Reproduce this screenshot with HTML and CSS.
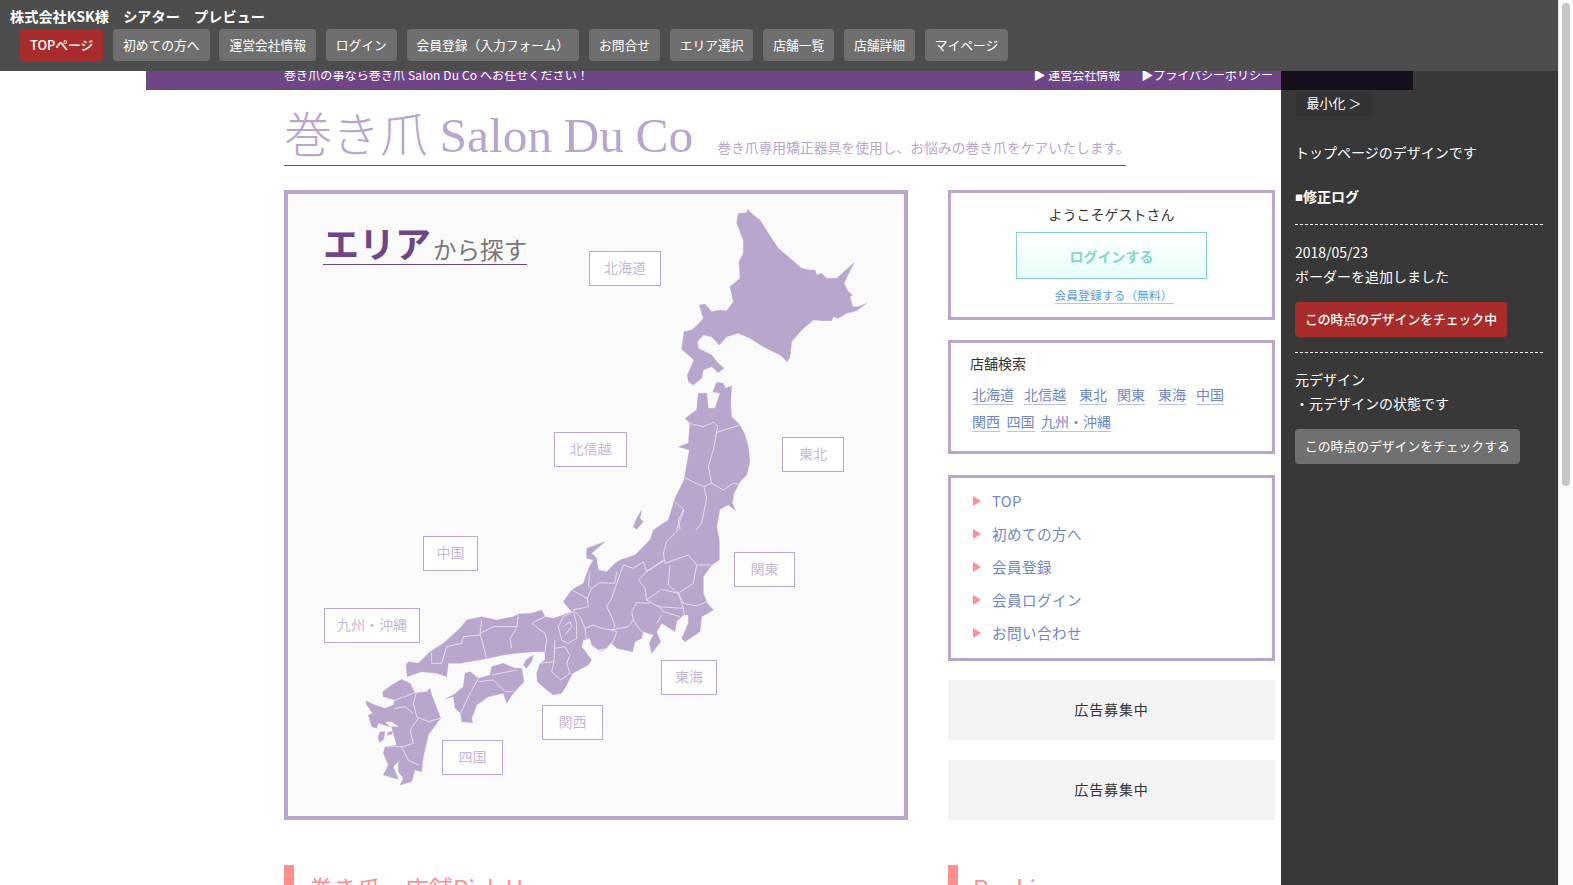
FILE: index.html
```html
<!DOCTYPE html>
<html lang="ja">
<head>
<meta charset="utf-8">
<title>巻き爪 Salon Du Co</title>
<link rel="stylesheet" href="styles.css">
</head>
<body>
<div class="viewport">
  <div class="page">
    <div class="topbar">
      <div class="topbar-inner">
        <span class="topbar-text">巻き爪の事なら巻き爪 Salon Du Co へお任せください！</span>
        <span class="toplinks"><a>▶ 運営会社情報</a><a>▶プライバシーポリシー</a></span>
      </div>
    </div>
    <div class="wrap">
      <div class="logo">
        <span class="logo-name"><span class="logo-cjk">巻き爪</span> Salon Du Co</span>
        <span class="logo-sub">巻き爪専用矯正器具を使用し、お悩みの巻き爪をケアいたします。</span>
      </div>
      <div class="cols">
        <div class="mapbox">
          <h2 class="maptitle"><b>エリア</b><span>から探す</span></h2>
          <svg class="japan" viewBox="0 0 620 620" aria-hidden="true">
            <g transform="translate(-288 -194)">
              <g transform="translate(560 190) scale(.33333)" class="land">
                <path d="M563 58L580 75L600 90L625 130L655 175L690 205L725 235L750 240L765 240L770 255L785 250L800 265L830 265L882 218L852 280L865 305L878 315L870 320L878 350L895 350L920 340L890 362L860 370L835 385L820 380L815 392L790 392L760 390L725 420L695 455L690 500L682 515L660 495L610 470L570 445L535 430L500 440L478 465L455 440L430 435L412 455L415 475L455 495L475 520L492 535L475 548L455 530L430 540L425 565L400 585L385 575L382 555L402 510L365 478L372 425L395 420L412 405L430 385L418 345L435 342L455 365L480 360L500 362L520 335L510 290L540 265L537 215L550 190L550 150L530 100L535 70L560 68Z"/>
              </g>
              <g transform="translate(350 500) scale(.33333)" class="land">
                <path d="M1088 -325L1100 -353L1120 -350L1127 -335L1145 -343L1142 -290L1145 -250L1170 -225L1185 -195L1195 -160L1200 -115L1190 -75L1170 -55L1152 -20L1147 10L1157 32L1135 15L1110 28L1100 80L1108 120L1108 180L1085 195L1060 230L1060 280L1072 310L1090 330L1055 350L1050 395L1005 425L995 415L1015 370L1015 345L1000 345L980 365L975 395L935 370L920 395L932 425L905 460L898 430L910 405L880 395L875 415L855 425L848 455L800 445L785 430L745 458L775 440L745 450L725 435L720 415L700 420L695 440L725 480L715 495L668 520L650 555L635 580L610 585L590 570L562 545L560 520L570 490L585 480L585 455L555 455L500 460L460 465L415 475L330 490L295 490L290 530L260 520L215 515L172 530L168 495L175 485L205 490L240 455L280 430L330 385L350 360L395 350L440 360L490 350L505 342L545 340L575 330L585 350L610 355L640 345L665 335L640 305L665 270L700 250L718 200L730 180L710 175L710 145L765 125L725 160L740 175L745 210L770 215L795 190L810 180L855 165L900 120L910 90L955 60L975 -5L1002 -60L1018 -150L985 -160L1015 -170L1020 -230L1005 -245L1040 -270L1045 -320L1070 -320L1075 -275L1095 -275L1110 -320Z"/>
                <path d="M875 30L870 55L880 65L860 88L850 80L860 55Z"/>
                <path d="M550 465L545 485L530 505L520 495L530 478Z"/>
                <path d="M345 520L360 515L385 535L420 525L425 500L460 490L495 505L515 505L522 545L490 580L470 610L460 580L415 590L380 615L365 655L368 668L335 665L332 640L315 625L310 590L285 597L310 585L340 560Z"/>
                <path d="M125 555L155 538L180 550L195 578L230 575L240 565L247 590L255 610L272 655L235 705L220 770L215 815L195 810L185 845L150 855L160 835L145 815L145 790L150 780L130 800L145 838L100 825L115 795L100 760L105 740L140 735L130 700L125 680L148 680L125 665L105 665L120 680L85 670L80 685L65 680L55 645L68 640L50 615L48 603L75 615L105 625L130 615L135 600L100 590L98 575Z"/>
                <path d="M90 695L105 695L100 720L88 727L84 712Z"/>
                <path d="M112 698L128 693L125 703L112 706Z"/>
              </g>
              <g transform="translate(560 190) scale(.33333)" class="pref">
                <path d="M385 700L410 705L430 710L460 697L473 708L460 780L445 830L455 880M468 728L540 705M372 862L430 890L455 880L490 900L520 880L535 882M432 890L440 925L425 1000L408 1020M345 935L372 960L350 1020"/>
              </g>
              <g transform="translate(350 500) scale(.33333)" class="pref">
                <path d="M1000 30L985 60L990 90M985 90L950 125L940 160L945 190L1015 165L1040 195L1085 195M960 195L955 255L985 280L1030 250L1040 195M945 180L890 215L880 185L850 205L820 195L795 265L785 295L770 320L785 350L795 380L785 390M940 180L890 215L865 240L885 265L890 300L925 320L1000 325L985 280M890 300L935 268L985 280L1000 310L1040 318L1072 305M1000 325L1005 355M925 315L940 335L990 350M900 310L860 308L845 335L850 360L835 380L785 390L755 385L730 375L705 385L690 350L670 330L715 320L712 295L665 270M800 215L795 250L750 248L725 265L715 260L720 215M712 295L725 265M850 360L875 395M935 345L920 370M705 385L710 420M785 390L800 395L790 425L780 432M670 335L640 350L625 380L635 420L655 430L680 415L680 370L670 335M640 380L660 365L665 380L645 405M585 350L545 370L585 400L590 420L585 455M615 420L612 485L605 515L632 540L660 520L650 490L660 465L645 440L615 445M570 490L612 485M505 345L500 385L480 415L485 445M395 360L390 400L410 475M390 400L430 380L500 380M340 410L390 405M340 410L335 430L290 440L275 490M245 455L245 490L275 490M425 525L500 510M385 535L350 600L332 640M385 545L430 540L465 575L490 575M165 590L200 575L190 610L200 650L235 665L270 655M135 625L165 620L190 640M205 655L180 690L190 730L155 742L175 780L205 795M100 740L155 740M165 590L135 600"/>
              </g>
            </g>
          </svg>
          <a class="pin pin-hokkaido">北海道</a>
          <a class="pin pin-hokushinetsu">北信越</a>
          <a class="pin pin-tohoku">東北</a>
          <a class="pin pin-chugoku">中国</a>
          <a class="pin pin-kanto">関東</a>
          <a class="pin pin-kyushu">九州・沖縄</a>
          <a class="pin pin-tokai">東海</a>
          <a class="pin pin-kansai">関西</a>
          <a class="pin pin-shikoku">四国</a>
        </div>
        <div class="side">
          <div class="box login">
            <p class="welcome">ようこそゲストさん</p>
            <a class="loginbtn">ログインする</a>
            <a class="signup">会員登録する（無料）</a>
          </div>
          <div class="box search">
            <p class="search-title">店舗検索</p>
            <div class="search-row"><a>北海道</a><a>北信越</a><a class="wide">東北</a><a>関東</a><a class="wide">東海</a><a>中国</a></div>
            <div class="search-row tight"><a>関西</a><a>四国</a><a>九州・沖縄</a></div>
          </div>
          <ul class="box menu">
            <li>TOP</li>
            <li>初めての方へ</li>
            <li>会員登録</li>
            <li>会員ログイン</li>
            <li>お問い合わせ</li>
          </ul>
          <div class="ad">広告募集中</div>
          <div class="ad">広告募集中</div>
        </div>
      </div>
      <div class="cols lower">
        <h3 class="sec sec-left">巻き爪　店舗Pick Up</h3>
        <h3 class="sec sec-right">Ranking</h3>
      </div>
    </div>

    <header class="preview">
      <div class="preview-title">株式会社KSK様　シアター　プレビュー</div>
      <nav class="preview-nav">
        <a class="active">TOPページ</a>
        <a>初めての方へ</a>
        <a>運営会社情報</a>
        <a>ログイン</a>
        <a>会員登録（入力フォーム）</a>
        <a>お問合せ</a>
        <a>エリア選択</a>
        <a>店舗一覧</a>
        <a>店舗詳細</a>
        <a>マイページ</a>
      </nav>
    </header>

    <aside class="panel">
      <a class="minimize">最小化 ＞</a>
      <p class="panel-lead">トップページのデザインです</p>
      <p class="panel-head"><span class="bullet">■</span>修正ログ</p>
      <div class="panel-item dashed">
        <p>2018/05/23</p>
        <p>ボーダーを追加しました</p>
        <a class="pbtn pbtn-on">この時点のデザインをチェック中</a>
      </div>
      <div class="panel-item dashed">
        <p>元デザイン</p>
        <p>・元デザインの状態です</p>
        <a class="pbtn">この時点のデザインをチェックする</a>
      </div>
    </aside>
  </div>
  <div class="scrollbar"><div class="thumb"></div></div>
</div>
</body>
</html>
```

FILE: styles.css
```css
* { box-sizing: border-box; }
html, body { margin: 0; height: 100%; overflow: hidden; }
body { font-family: "Noto Sans CJK JP", "Noto Sans", sans-serif; color: #333; background: #fff; }
p, h2, h3, ul { margin: 0; padding: 0; font-weight: normal; }
a { color: inherit; text-decoration: none; }

.viewport { display: flex; height: 885px; }
.page { position: relative; flex: 1; overflow: hidden; background: #fff; }
.scrollbar { width: 15px; background: #fafafa; border-left: 1px solid #e8e8e8; padding: 3px 3px 0 3px; }
.thumb { height: 483px; background: #c6c6c6; border-radius: 4px; }

/* top bar */
.topbar { width: 1267px; height: 90px; margin-left: 146px; background: #6f4685; color: #fff; font-size: 12px; }
.topbar-inner { width: 992px; height: 90px; margin-left: 138px; padding: 66px 3px 0 0; line-height: 17px; display: flex; justify-content: space-between; }
.topbar-text { letter-spacing: .12px; }
.toplinks { display: flex; gap: 21px; }

.wrap { width: 992px; margin: 0 auto; padding-left: 1px; }

/* logo */
.logo { display: flex; align-items: flex-end; width: 842px; height: 76px; border-bottom: 1px solid #6f4685; color: #b9a6cf; white-space: nowrap; }
.logo-name { font-family: "Liberation Serif", "Noto Sans CJK JP", serif; font-size: 49.5px; line-height: 70px; margin-bottom: -6px; word-spacing: -1px; }
.logo-cjk { font-family: "Noto Sans CJK JP", sans-serif; font-size: 48px; font-weight: 300; }
.logo-sub { font-size: 13.8px; line-height: 20px; margin: 0 0 8px 24px; }

.cols { display: flex; gap: 40px; margin-top: 24px; }

/* map */
.mapbox { position: relative; flex: none; width: 624px; height: 630px; border: 4px solid #b9a6cd; background: #fafafa; }
.maptitle { position: absolute; left: 35px; top: 30px; display: flex; align-items: flex-end; height: 41px; border-bottom: 1px solid #6f4685; white-space: nowrap; line-height: 40px; }
.maptitle b { font-size: 36px; font-weight: 700; color: #6f4685; line-height: 40px; margin-bottom: 2px; }
.maptitle span { font-size: 23.5px; color: #777; margin-left: 2px; line-height: 30px; }
.japan { position: absolute; left: 0; top: 0; width: 620px; height: 620px; }
.land path { fill: #b9a6cd; stroke: #b9a6cd; stroke-width: 1; stroke-linejoin: round; }
.pref path { fill: none; stroke: #efeaf3; stroke-width: 2.4; stroke-linejoin: round; }

.pin { position: absolute; display: flex; align-items: center; justify-content: center; height: 35px; padding-bottom: 3px; background: #fff; border: 1px solid #b9a6cd; color: #c6b7d8; font-size: 14px; }
.pin-hokkaido { left: 301px; top: 57px; width: 72px; }
.pin-hokushinetsu { left: 266px; top: 238px; width: 73px; }
.pin-tohoku { left: 494px; top: 243px; width: 62px; }
.pin-chugoku { left: 135px; top: 342px; width: 55px; }
.pin-kanto { left: 446px; top: 358px; width: 61px; }
.pin-kyushu { left: 36px; top: 414px; width: 96px; }
.pin-tokai { left: 373px; top: 466px; width: 56px; }
.pin-kansai { left: 254px; top: 511px; width: 61px; }
.pin-shikoku { left: 154px; top: 546px; width: 61px; }

/* side column */
.side { flex: none; width: 327px; display: flex; flex-direction: column; gap: 20px; }
.box { border: 3px solid #b9a6cd; background: #fff; }
.login { height: 130px; display: flex; flex-direction: column; align-items: center; padding-top: 9px; }
.welcome { font-size: 14px; line-height: 24px; color: #333; }
.loginbtn { display: flex; align-items: center; justify-content: center; width: 191px; height: 47px; margin-top: 6px; border: 1px solid #85d3cb; background: linear-gradient(#fff, #e6fdfb); color: #85d3cb; font-size: 14px; font-weight: 700; }
.signup { margin: 7px 0 0 6px; padding: 0 2px 0 0; border-bottom: 1px solid #a8c8f5; color: #5b9bea; font-size: 11.8px; line-height: 17px; }
.search { height: 114px; margin-bottom: 1px; padding: 8px 19px; }
.search-title { font-size: 14px; line-height: 24px; color: #333; }
.search-row { display: flex; gap: 10px; margin: 10px 0 0 2px; font-size: 14px; line-height: 19px; color: #6f86c9; }
.search-row + .search-row { margin-top: 7px; }
.search-row a { border-bottom: 1px solid #b7c3e6; }
.search-row a.wide { margin-left: 3px; }
.search-row.tight { gap: 6.5px; }
.menu { height: 186px; margin-bottom: -1px; list-style: none; padding: 7px 0 0 22px; }
.menu li { position: relative; padding-left: 19px; height: 33px; line-height: 32px; font-size: 14.6px; color: #6f86c9; letter-spacing: .4px; }
.menu li::before { content: ""; position: absolute; left: 0; top: 11px; border-left: 8px solid #ff8f8f; border-top: 5px solid transparent; border-bottom: 5px solid transparent; }
.ad { height: 60px; padding-bottom: 2px; background: #f3f3f3; display: flex; align-items: center; justify-content: center; font-size: 14px; letter-spacing: .9px; color: #333; }

/* lower headings */
.lower { margin-top: 45px; }
.sec { height: 40px; border-left: 10px solid #ff8f8f; padding-left: 15px; color: #ff8f8f; font-size: 24px; line-height: 40px; padding-top: 3px; white-space: nowrap; }
.sec-left { width: 624px; flex: none; }
.sec-right { width: 327px; flex: none; }

/* preview header overlay */
.preview { position: absolute; left: 0; top: 0; right: 0; height: 71px; padding: 6px 10px 0; background: #4d4d4d; color: #fff; }
.preview-title { font-size: 14.2px; font-weight: 700; line-height: 20px; white-space: pre; }
.preview-nav { display: flex; gap: 9.8px; margin: 3px 0 0 10px; }
.preview-nav a { display: block; height: 32px; padding: 0 10px; background: #6f6f6f; border-radius: 4px; font-size: 12.75px; line-height: 32px; color: #fff; white-space: nowrap; }
.preview-nav a.active { background: #a82c2c; font-weight: 500; }

/* design panel overlay */
.panel { position: absolute; left: 1281px; top: 71px; bottom: 0; right: 0; padding: 21px 15px 0 14px; background: rgba(0, 0, 0, .78); color: #fff; font-size: 14px; }
.minimize { display: block; width: 76px; height: 24px; line-height: 22px; text-align: center; background: #333; font-size: 13px; margin-left: 1px; }
.panel-lead { margin-top: 23px; line-height: 26px; }
.panel-head { margin-top: 18px; font-weight: 700; font-size: 14px; line-height: 26px; }
.bullet { font-size: 8px; vertical-align: 1px; }
.panel-item { padding-top: 15px; line-height: 24px; }
.panel-item + .panel-item { padding-top: 14px; }
.dashed { border-top: 1px dashed #fff; }
.panel-head + .panel-item { margin-top: 13px; }
.pbtn { display: block; width: max-content; height: 35px; margin: 14px 0 15px; padding: 0 10px; border-radius: 4px; background: #707070; font-size: 12.8px; line-height: 34px; }
.pbtn-on { background: #a82c2c; font-weight: 500; }
```
